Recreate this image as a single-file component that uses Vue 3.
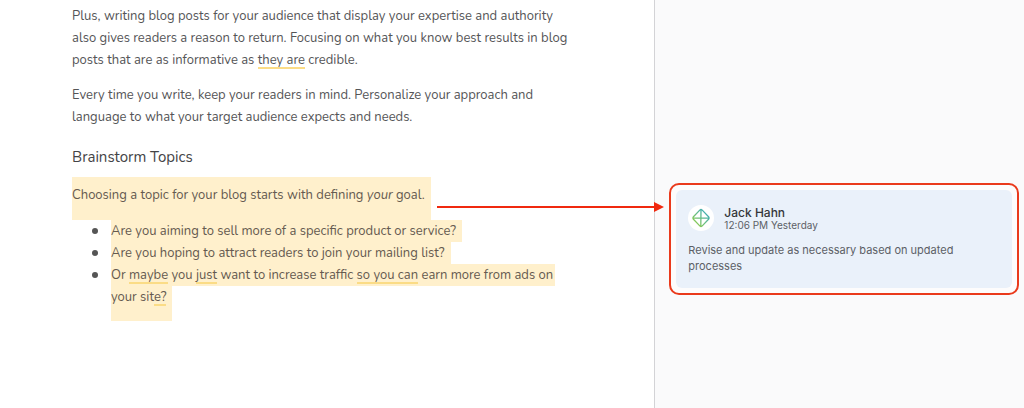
<script setup>
const bullets = [
  {
    id: 1,
    lines: [[{ text: 'Are you aiming to sell more of a specific product or service?' }]]
  },
  {
    id: 2,
    lines: [[{ text: 'Are you hoping to attract readers to join your mailing list?' }]]
  },
  {
    id: 3,
    lines: [
      [
        { text: 'Or ' },
        { text: 'maybe', hint: true },
        { text: ' you ' },
        { text: 'just', hint: true },
        { text: ' want to increase traffic ' },
        { text: 'so you can', hint: true },
        { text: ' earn more from ads on' }
      ],
      [{ text: 'your sit' }, { text: 'e?', hint: true }]
    ]
  }
]

const comment = {
  author: 'Jack Hahn',
  time: '12:06 PM Yesterday',
  text: 'Revise and update as necessary based on updated processes'
}
</script>

<template>
  <div class="editor">
    <main class="document">
      <p>
        Plus, writing blog posts for your audience that display your expertise and authority<br />
        also gives readers a reason to return. Focusing on what you know best results in blog<br />
        posts that are as informative as <span class="hint">they are</span> credible.
      </p>
      <p>
        Every time you write, keep your readers in mind. Personalize your approach and<br />
        language to what your target audience expects and needs.
      </p>

      <h3>Brainstorm Topics</h3>

      <p class="marked intro">Choosing a topic for your blog starts with defining <em>your</em> goal.</p>
      <ul>
        <li v-for="bullet in bullets" :key="bullet.id">
          <div v-for="(line, i) in bullet.lines" :key="i" class="marked">
            <span v-for="(part, j) in line" :key="j" :class="{ hint: part.hint }">{{ part.text }}</span>
          </div>
        </li>
      </ul>
    </main>

    <aside class="sidebar">
      <div class="callout">
        <svg class="arrow" width="227" height="12" viewBox="0 0 227 12" aria-hidden="true">
          <path d="M0 6H219" stroke="#f0290f" stroke-width="2" />
          <path d="M217 1L227 6L217 11Z" fill="#f0290f" />
        </svg>

        <article class="comment">
          <header>
            <svg class="avatar" width="26" height="26" viewBox="0 0 26 26" aria-hidden="true">
              <defs>
                <linearGradient id="gem" x1="0" y1="1" x2="1" y2="0">
                  <stop offset="0.2" stop-color="#86c95a" />
                  <stop offset="0.8" stop-color="#43aeb0" />
                </linearGradient>
              </defs>
              <circle cx="13" cy="13" r="13" fill="#fff" />
              <path
                d="M12 4.9Q13 4.1 14 4.9L20.8 12Q21.5 13 20.8 14L14 21.1Q13 21.9 12 21.1L5.2 14Q4.5 13 5.2 12ZM5 13.2L21 12.8M13 4.8L12.8 21"
                fill="none"
                stroke="url(#gem)"
                stroke-width="1.3"
                stroke-linejoin="round"
              />
            </svg>
            <div>
              <strong>{{ comment.author }}</strong>
              <time>{{ comment.time }}</time>
            </div>
          </header>
          <p>{{ comment.text }}</p>
        </article>
      </div>
    </aside>
  </div>
</template>

<style>
body {
  margin: 0;
}
</style>

<style scoped>
.editor {
  display: flex;
  min-height: 100vh;
  background: #fff;
}

.document {
  box-sizing: border-box;
  width: 63.9%;
  padding: 5px 16px 0 72px;
  color: #555557;
  font-family: Nunito, Lato, sans-serif;
  font-size: 13px;
  line-height: 22px;
  white-space: nowrap;
}

.document p {
  margin: 0 0 13px;
}

.document h3 {
  margin: 18px 0 9px;
  color: #444446;
  font-size: 15px;
  font-weight: 400;
}

.marked {
  width: fit-content;
  padding-right: 6px;
  background: #fff0cc;
  color: #655a50;
  white-space: pre;
}

.document .intro {
  margin: 0;
  padding: 7px 6px 14px 0;
}

.document ul {
  margin: 0;
  padding: 0 0 0 39px;
  list-style: none;
}

.document li {
  position: relative;
}

.document li::before {
  content: '';
  position: absolute;
  top: 8px;
  left: -19px;
  width: 6px;
  height: 6px;
  border-radius: 50%;
  background: #555;
}

li:last-child .marked:first-child {
  padding-right: 2px;
}

li:last-child .marked:last-child {
  padding-bottom: 13px;
}

.hint {
  box-shadow: inset 0 -2px 0 #fbdc86;
}

.sidebar {
  box-sizing: border-box;
  flex: 1;
  min-width: 0;
  padding: 183px 5px 0 14px;
  border-left: 1px solid #d3d3d6;
  background: #fafafb;
  font-family: Inter, sans-serif;
}

.callout {
  position: relative;
  padding: 5px;
  border: 2px solid #ea3a1c;
  border-radius: 10px;
  background: #fdfcfc;
}

.arrow {
  position: absolute;
  top: 16px;
  right: calc(100% + 7px);
}

.comment {
  padding: 13px 12px 14px;
  border-radius: 6px;
  background: #eaf1fa;
  color: #5c5f66;
}

.comment header {
  display: flex;
  align-items: center;
  gap: 10px;
}

.comment header div {
  padding-top: 3px;
}

.comment strong,
.comment time {
  display: block;
  font-size: 10px;
  line-height: 13px;
}

.comment strong {
  color: #35373b;
  font-size: 12px;
  font-weight: 500;
}

.comment p {
  max-width: 290px;
  margin: 10px 0 0;
  font-size: 11px;
  line-height: 16px;
}
</style>
